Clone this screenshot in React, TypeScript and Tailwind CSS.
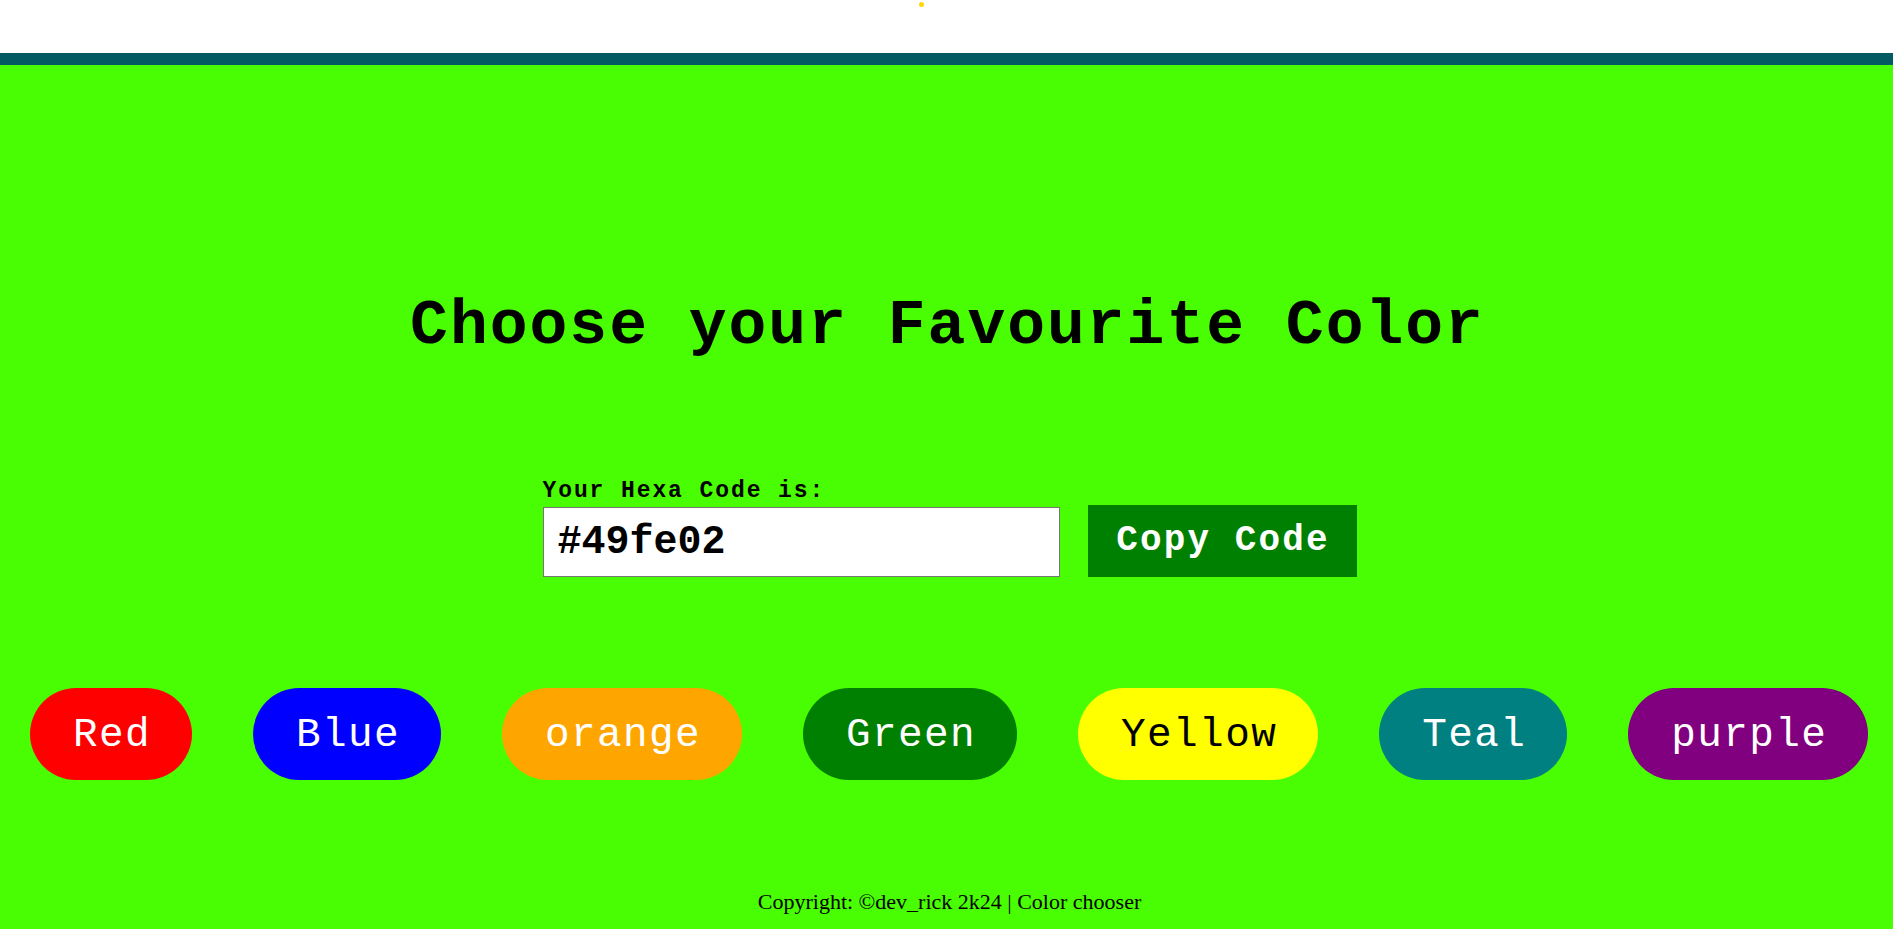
import { useState } from "react";

type Swatch = {
  name: string;
  hex: string;
  className: string;
};

const swatches: Swatch[] = [
  { name: "Red", hex: "#ff0000", className: "bg-[#ff0000] text-white" },
  { name: "Blue", hex: "#0000ff", className: "bg-[#0000ff] text-white" },
  { name: "orange", hex: "#ffa500", className: "bg-[#ffa500] text-white" },
  { name: "Green", hex: "#008000", className: "bg-[#008000] text-white" },
  { name: "Yellow", hex: "#ffff00", className: "bg-[#ffff00] text-black" },
  { name: "Teal", hex: "#008080", className: "bg-[#008080] text-white" },
  { name: "purple", hex: "#800080", className: "bg-[#800080] text-white" },
];

const mono = "font-['Liberation_Mono','Courier_New',monospace]";

const App = () => {
  const [hexCode, setHexCode] = useState("#49fe02");

  const copyCode = () => {
    void navigator.clipboard?.writeText(hexCode).catch(() => undefined);
  };

  const header = (
    <div className="relative h-[53px] w-full bg-white">
      <span className="absolute left-[919px] top-[2px] h-[5px] w-[5px] rounded-full bg-[#ffd800]" />
    </div>
  );

  const codeBox = (
    <div className="flex flex-col pl-[6px]">
      <label
        htmlFor="hexa"
        className={`${mono} mb-[3px] text-[23px] font-bold leading-[22px] tracking-[1.9px] text-black`}
      >
        Your Hexa Code is:
      </label>
      <div className="flex items-start gap-[28px]">
        <input
          id="hexa"
          type="text"
          readOnly
          value={hexCode}
          className={`${mono} mt-[2px] h-[70px] w-[517px] border border-[#767676] bg-white pl-[14px] text-[40px] font-bold text-black outline-none`}
        />
        <button
          type="button"
          onClick={copyCode}
          className={`${mono} flex h-[72px] w-[269px] cursor-pointer items-center justify-center bg-[#008000] pl-[2px] text-[36px] font-bold leading-[36px] tracking-[2.1px] text-white`}
        >
          Copy Code
        </button>
      </div>
    </div>
  );

  const swatchRow = (
    <div className="mt-[111px] flex w-full gap-[61px] pl-[30px]">
      {swatches.map((swatch) => (
        <button
          key={swatch.name}
          type="button"
          onClick={() => setHexCode(swatch.hex)}
          className={`${mono} ${swatch.className} flex h-[92px] cursor-pointer items-center justify-center rounded-[50px] pl-[43px] pr-[41px] pt-[3px] text-[41px] leading-none tracking-[1.4px]`}
        >
          {swatch.name}
        </button>
      ))}
    </div>
  );

  return (
    <div className="flex min-h-screen flex-col">
      {header}
      <div className="h-[12px] w-full bg-[#045b61]" />
      <main
        className="flex flex-1 flex-col items-center"
        style={{ backgroundColor: hexCode }}
      >
        <h1
          className={`${mono} mt-[230px] pl-[2px] text-[63px] font-bold leading-[63px] tracking-[2px] text-black`}
        >
          Choose your Favourite Color
        </h1>
        <div className="mt-[122px]">{codeBox}</div>
        {swatchRow}
        <footer className="mt-[105px] pl-[6px] font-['Liberation_Serif','Times_New_Roman',serif] text-[22px] text-black">
          Copyright: ©dev_rick 2k24 | Color chooser
        </footer>
      </main>
    </div>
  );
};

export default App;
